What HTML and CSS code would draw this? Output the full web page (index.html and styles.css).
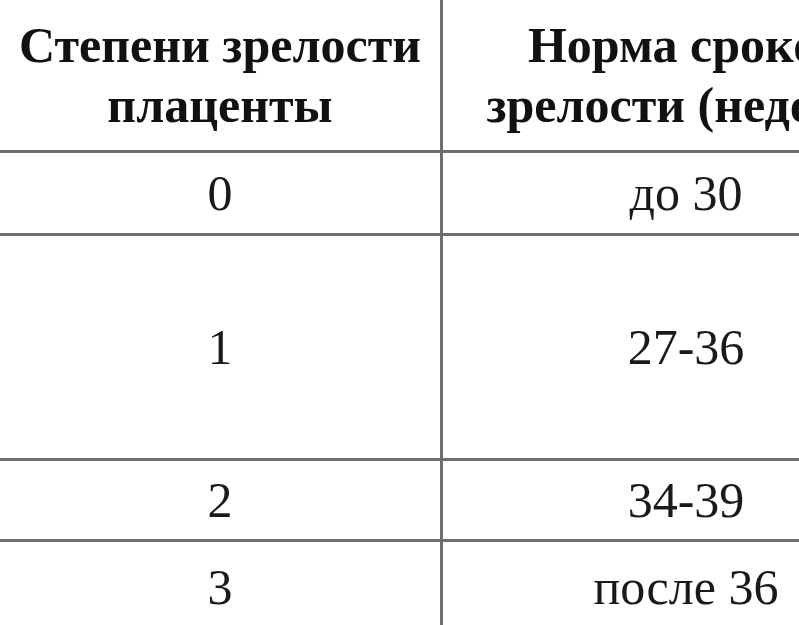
FILE: index.html
```html
<!DOCTYPE html>
<html lang="ru">
<head>
<meta charset="utf-8">
<title>Степени зрелости плаценты</title>
<link rel="stylesheet" href="styles.css">
</head>
<body>
<div class="table">
  <div class="cell head">Степени зрелости<br>плаценты</div>
  <div class="cell head">Норма сроков<br>зрелости (недели)</div>
  <div class="cell">0</div>
  <div class="cell">до 30</div>
  <div class="cell">1</div>
  <div class="cell">27-36</div>
  <div class="cell">2</div>
  <div class="cell">34-39</div>
  <div class="cell">3</div>
  <div class="cell">после 36</div>
</div>
</body>
</html>
```
FILE: styles.css
```css
html, body {
  margin: 0;
  padding: 0;
  background: #ffffff;
  overflow: hidden;
}
body {
  width: 799px;
  height: 625px;
  font-family: "Liberation Serif", "Times New Roman", serif;
  color: #1a1a1a;
}
.table {
  display: grid;
  grid-template-columns: 440px 486px;
  grid-template-rows: 150px 80px 222px 78px 90px;
  gap: 3px;
  background: #6e6e6e;
  width: 929px;
}
.cell {
  background: #ffffff;
  display: flex;
  align-items: center;
  justify-content: center;
  text-align: center;
  font-size: 50px;
  white-space: nowrap;
}
.head {
  font-weight: bold;
  font-size: 50px;
  line-height: 60px;
  color: #111111;
}
```
